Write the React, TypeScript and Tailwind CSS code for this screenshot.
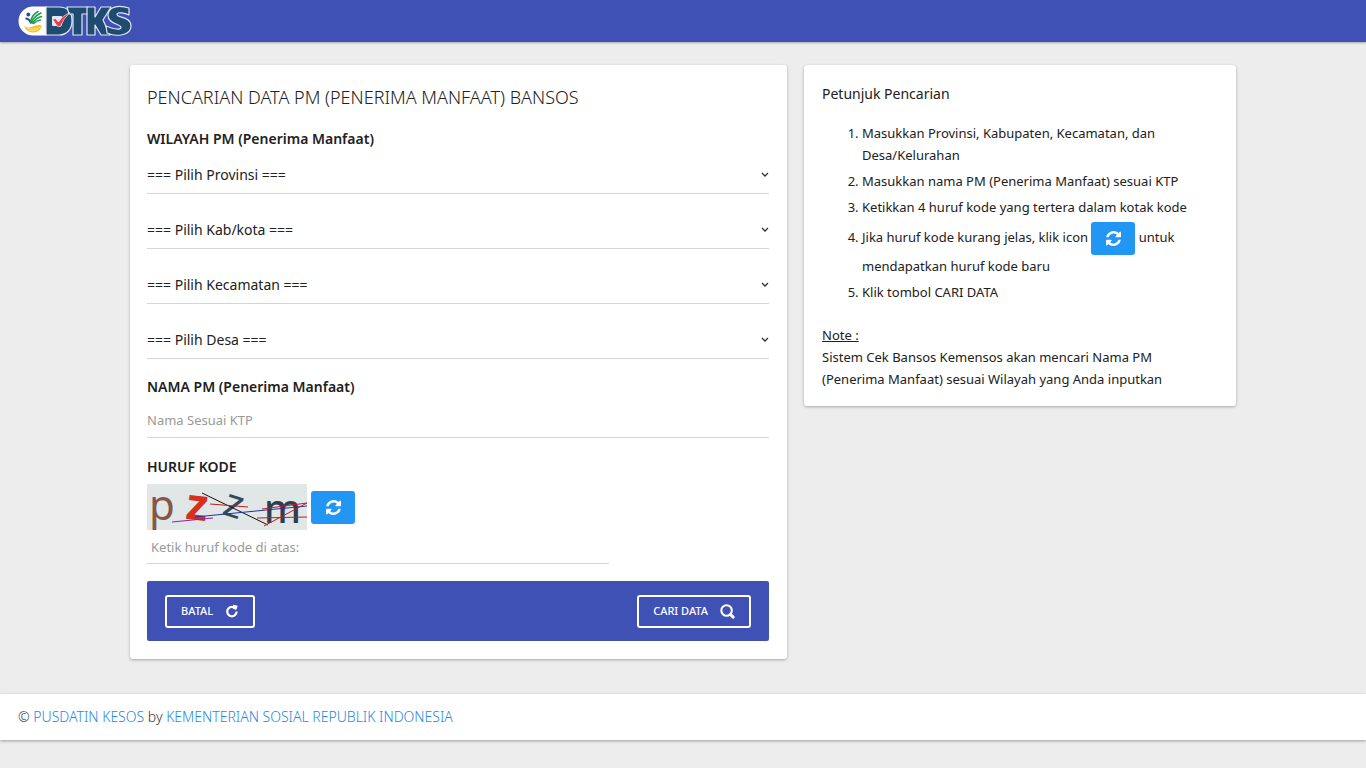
import { useState } from "react";

const OPTIONS = [
  { id: "provinsi", label: "Provinsi" },
  { id: "kabupaten", label: "Kab/kota" },
  { id: "kecamatan", label: "Kecamatan" },
  { id: "desa", label: "Desa" },
];

function RefreshIcon() {
  return (
    <svg viewBox="0 0 1536 1536" className="h-[15px] w-[15px] fill-current" aria-hidden="true">
      <path d="M1511 928q0 5-1 7-64 268-268 434.5t-478 166.5q-146 0-282.5-55t-243.5-157l-129 129q-19 19-45 19t-45-19-19-45v-448q0-26 19-45t45-19h448q26 0 45 19t19 45-19 45l-137 137q71 66 161 102t187 36q134 0 250-65t186-179q11-17 53-117 8-23 30-23h192q13 0 22.5 9.5t9.5 22.5zm25-800v448q0 26-19 45t-45 19h-448q-26 0-45-19t-19-45 19-45l138-138q-148-137-349-137-134 0-250 65t-186 179q-11 17-53 117-8 23-30 23h-199q-13 0-22.5-9.5t-9.5-22.5v-7q65-268 270-434.5t480-166.5q146 0 284 55.5t245 156.5l130-129q19-19 45-19t45 19 19 45z" />
    </svg>
  );
}

function RefreshButton() {
  return (
    <button
      type="button"
      aria-label="Muat ulang kode"
      className="inline-flex h-[33px] w-11 items-center justify-center rounded-[3px] bg-[#2196f3] align-middle text-white"
    >
      <RefreshIcon />
    </button>
  );
}

function ReloadIcon() {
  return (
    <svg viewBox="0 0 14 14" className="h-3.5 w-3.5" fill="none" aria-hidden="true">
      <path d="M11.600 7.600A4.700 4.700 0 1 1 9 3.400" stroke="currentColor" strokeWidth="2.200" />
      <path d="M8.200 0.800L12.800 1.800L11.200 6L7.800 4.600Z" fill="currentColor" />
    </svg>
  );
}

function SearchIcon() {
  return (
    <svg viewBox="0 0 16 16" className="h-[15px] w-[15px]" fill="none" stroke="currentColor" aria-hidden="true">
      <circle cx="7" cy="7" r="5.600" strokeWidth="2.200" />
      <path d="M11.200 11.200L14 14" strokeWidth="3.200" strokeLinecap="round" />
    </svg>
  );
}

function Logo() {
  return (
    <svg viewBox="0 0 114 32" className="h-8 w-[114px]" role="img" aria-label="DTKS">
      <path d="M15 1.500H29V30.500H15A14.500 14.500 0 0 1 15 1.500Z" fill="#fff" />
      <circle cx="10.300" cy="9.500" r="1.900" fill="#234a9c" />
      <path d="M7.500 13.500Q11.500 13.500 13 18.500" fill="none" stroke="#234a9c" strokeWidth="1.800" />
      <g fill="none" stroke="#1d9a50" strokeWidth="1.600" strokeLinecap="round">
        <path d="M12.500 17Q14 9.500 20 6.500" />
        <path d="M13.500 17.500Q16 11 23 8" />
        <path d="M14.500 18Q18 13 23.500 11.500" />
        <path d="M15.500 18.500Q19 15.500 22.500 15" />
      </g>
      <path d="M6 21Q10 23.500 15 21.500Q20 19 24 20.500Q22 27.500 15 27.500Q8.500 27.500 6 21Z" fill="#f5c21b" />
      <path d="M7.500 22.500Q15 26 22.500 22M10 25Q15 27 20.500 24.500" fill="none" stroke="#fff" strokeWidth="0.500" />
      <g fill="#1f4b70" stroke="#dfe8f5" strokeWidth="1.200" strokeLinejoin="round">
        <path d="M28 2H41C50 2 54 8 54 16C54 24 49 30 41 30H28Z" />
        <path d="M49 2H70V9H64V30H55V9H51Z" />
        <path d="M69 2H77V12L83 2H93L85 15L92 30H83L77 20V30H69Z" />
        <path d="M111 3V10C107 8 99 6.500 99 9.500C99 13 113 11.500 113 21C113 31 98 32 89 28L88 21C95 24 103 25.500 103 22.500C103 19 90 19 90 10.500C90 1 101 0 111 3Z" />
      </g>
      <rect x="34" y="11" width="10" height="10" rx="1" fill="#dfe8f5" />
      <path d="M34.500 14.500L37.500 13.500L40.500 17Q44 11 52 7.500Q45 14 42.500 21.500H39.500Z" fill="#ed3b4b" stroke="#fff" strokeWidth="0.600" />
    </svg>
  );
}

function Captcha() {
  return (
    <svg viewBox="0 0 160 46" className="h-[46px] w-40 overflow-visible bg-[#e1e6e7]" role="img" aria-label="Kode captcha">
      <g fontFamily="Noto Sans, sans-serif">
        <text x="2" y="36" fontSize="42" fill="#865647">p</text>
        <text x="39" y="36" fontSize="44" fontWeight="700" fill="#d8301f" transform="rotate(7 50 25)">z</text>
        <text x="77" y="33" fontSize="40" fill="#34495e" transform="rotate(18 86 22)">z</text>
        <text x="117" y="39" fontSize="39" fontWeight="500" fill="#2c3e50">m</text>
      </g>
      <g fill="none" strokeWidth="1">
        <path d="M55 9L121 41" stroke="#111" />
        <path d="M25 38L66 34" stroke="#8b22a8" />
        <path d="M48 33L160 22" stroke="#2434a0" />
        <path d="M63 20L101 23M110 34L160 33M115 25L160 19M117 42L160 19" stroke="#c51c1c" />
      </g>
    </svg>
  );
}

function Chevron() {
  return (
    <svg viewBox="0 0 8 6" className="pointer-events-none absolute right-0 top-4 h-1.5 w-2" fill="none" aria-hidden="true">
      <path d="M1 1L4 4L7 1" stroke="#333" strokeWidth="1.300" />
    </svg>
  );
}

export default function App() {
  const [name, setName] = useState("");
  const [code, setCode] = useState("");
  const reset = () => {
    setName("");
    setCode("");
  };

  return (
    <div className="min-h-screen bg-[#ededed] font-['Noto_Sans',sans-serif] text-[13px] leading-[22px] text-[#212121]">
      <header className="flex h-[42px] items-center bg-[#3f51b5] px-[18px] shadow-[0_1px_2px_rgba(0,0,0,0.3)]">
        <a href="#"><Logo /></a>
      </header>

      <main className="mx-auto mt-[23px] grid max-w-[1106px] grid-cols-[657fr_432fr] items-start gap-[17px]">
        <section className="rounded-[3px] bg-white pt-5 pr-[18px] pb-[18px] pl-[17px] shadow-[0_1px_3px_rgba(0,0,0,0.3)]">
          <form onSubmit={(e) => e.preventDefault()} onReset={reset}>
            <h1 className="text-lg leading-6 font-light">PENCARIAN DATA PM (PENERIMA MANFAAT) BANSOS</h1>
            <h2 className="mt-[19px] text-sm leading-[22px] font-semibold">WILAYAH PM (Penerima Manfaat)</h2>
            <div className="mt-1.5 flex flex-col gap-[17px]">
              {OPTIONS.map((o) => (
                <div key={o.id} className="relative">
                  <select
                    id={o.id}
                    aria-label={o.label}
                    className="block h-[38px] w-full appearance-none border-b border-[#d5d5d5] bg-transparent text-sm"
                  >
                    <option>{`=== Pilih ${o.label} ===`}</option>
                  </select>
                  <Chevron />
                </div>
              ))}
            </div>
            <label htmlFor="nama" className="mt-[17px] block text-sm leading-[22px] font-semibold">NAMA PM (Penerima Manfaat)</label>
            <input
              id="nama"
              value={name}
              onChange={(e) => setName(e.target.value)}
              placeholder="Nama Sesuai KTP"
              className="mt-1 block h-9 w-full border-b border-[#d5d5d5] pt-px placeholder:text-[#999]"
            />
            <label htmlFor="kode" className="mt-[18px] block text-sm leading-[22px] font-semibold">HURUF KODE</label>
            <div className="mt-1.5 flex items-center gap-1">
              <Captcha />
              <RefreshButton />
            </div>
            <input
              id="kode"
              value={code}
              onChange={(e) => setCode(e.target.value)}
              placeholder="Ketik huruf kode di atas:"
              className="block h-[34px] w-[462px] max-w-full border-b border-[#d5d5d5] px-1 placeholder:text-[#999]"
            />
            <div className="mt-[17px] flex h-[60px] items-center justify-between rounded-[2px] bg-[#3f51b5] px-[18px] text-[11px] font-medium text-white">
              <button type="reset" className="flex h-[33px] items-center gap-3 rounded-[3px] border-2 border-white px-3.5">
                BATAL <ReloadIcon />
              </button>
              <button type="submit" className="flex h-[33px] items-center gap-3 rounded-[3px] border-2 border-white px-3.5">
                CARI DATA <SearchIcon />
              </button>
            </div>
          </form>
        </section>

        <aside className="rounded-[3px] bg-white px-[18px] pt-[18px] pb-4 shadow-[0_1px_3px_rgba(0,0,0,0.3)]">
          <h2 className="text-sm leading-[22px]">Petunjuk Pencarian</h2>
          <ol className="mt-[17px] flex list-decimal flex-col gap-1 pl-10">
            <li>Masukkan Provinsi, Kabupaten, Kecamatan, dan Desa/Kelurahan</li>
            <li>Masukkan nama PM (Penerima Manfaat) sesuai KTP</li>
            <li>Ketikkan 4 huruf kode yang tertera dalam kotak kode</li>
            <li>Jika huruf kode kurang jelas, klik icon <RefreshButton /> untuk mendapatkan huruf kode baru</li>
            <li>Klik tombol CARI DATA</li>
          </ol>
          <p className="mt-[21px] pr-10">
            <span className="underline">Note :</span>
            <br />
            Sistem Cek Bansos Kemensos akan mencari Nama PM (Penerima Manfaat) sesuai Wilayah yang Anda inputkan
          </p>
        </aside>
      </main>

      <footer className="mt-[35px] bg-white px-[18px] py-3 text-sm leading-[22px] font-light text-[#333] shadow-[0_1px_3px_rgba(0,0,0,0.35)]">
        © <a href="#" className="text-[#1e88e5]">PUSDATIN KESOS</a> by{" "}
        <a href="#" className="text-[#1e88e5]">KEMENTERIAN SOSIAL REPUBLIK INDONESIA</a>
      </footer>
    </div>
  );
}
